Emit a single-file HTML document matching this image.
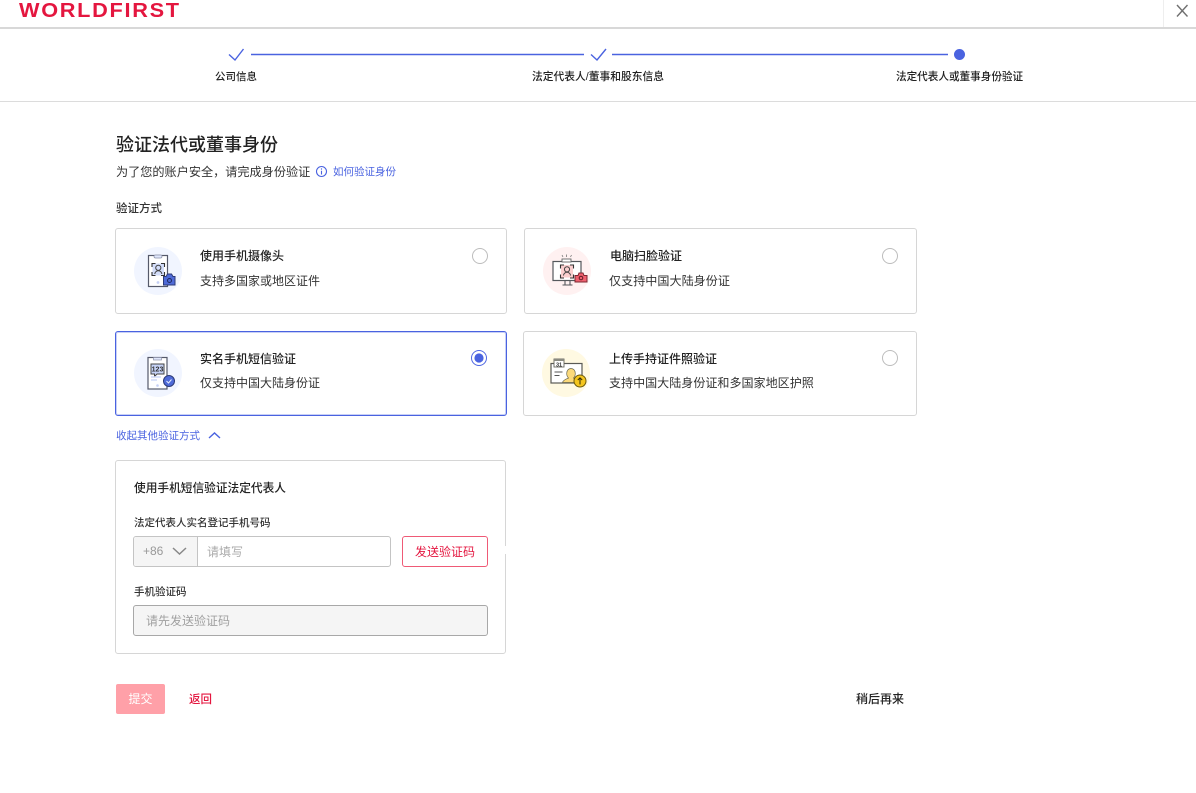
<!DOCTYPE html>
<html lang="zh-CN"><head><meta charset="utf-8"><title>WorldFirst</title>
<style>
html,body{margin:0;padding:0;background:#fff}
body{width:1196px;height:793px;overflow:hidden;position:relative;font-family:"Liberation Sans","Noto Sans CJK SC",sans-serif;color:#222}
.a{position:absolute;white-space:nowrap}
.t{position:absolute;white-space:nowrap;line-height:16px}
.m{font-weight:500}
.card{position:absolute;box-sizing:border-box;border:1px solid #d6d6d6;border-radius:3px;background:#fff}
.radio{position:absolute;box-sizing:border-box;width:16px;height:16px;border:1px solid #bdbdbd;border-radius:50%;background:#fff}
svg{position:absolute;overflow:visible}
</style></head><body>
<svg style="left:0;top:0" width="200" height="27"><text transform="translate(19,17) scale(1.06,1)" x="0" y="0" font-family="Liberation Sans" font-weight="700" font-size="20.500" fill="#e4163f" textLength="151" lengthAdjust="spacing">WORLDFIRST</text></svg>
<div class="a" style="left:0;top:27px;width:1196px;height:2px;background:#d8d8d8"></div>
<div class="a" style="left:1163px;top:0;width:1px;height:27px;background:#eee"></div>
<svg style="left:1176px;top:4px" width="13" height="13"><path d="M1 1L11.500 12.500M11.500 1L1 12.500" stroke="#707070" stroke-width="1.400" fill="none"/></svg>

<svg style="left:0;top:40px" width="1196" height="30" fill="none">
<path d="M229 14.500L235 20L243.500 9" stroke="#4a63e0" stroke-width="1.400"/>
<path d="M251 14.500H584M612 14.500H948" stroke="#4a63e0" stroke-width="1.500"/>
<path d="M591 14.500L597 20L606 9" stroke="#4a63e0" stroke-width="1.400"/>
<circle cx="959.500" cy="14.500" r="5.500" fill="#4a63e0"/>
</svg>
<div class="t m" style="left:215px;top:69px;font-size:10.500px">公司信息</div>
<div class="t m" style="left:532px;top:69px;font-size:10.750px">法定代表人/董事和股东信息</div>
<div class="t m" style="left:896px;top:69px;font-size:10.600px">法定代表人或董事身份验证</div>
<div class="a" style="left:0;top:101px;width:1196px;height:1px;background:#dcdcdc"></div>

<div class="t m" style="left:116px;top:134px;font-size:18px;line-height:22px;color:#222">验证法代或董事身份</div>
<div class="t" style="left:116px;top:164px;font-size:12.150px;color:#333">为了您的账户安全，请完成身份验证</div>
<svg style="left:315px;top:165px" width="13" height="13" fill="none"><circle cx="6.500" cy="6.500" r="5" stroke="#4a63e0" stroke-width="1.100"/><path d="M6.500 5.800V9.500M6.500 3.400V4.600" stroke="#4a63e0" stroke-width="1.100"/></svg>
<div class="t" style="left:333px;top:164px;font-size:10.500px;color:#4a63e0">如何验证身份</div>
<div class="t m" style="left:116px;top:201px;font-size:11.500px;color:#333">验证方式</div>

<div class="card" style="left:115px;top:228px;width:392px;height:86px"></div>
<div class="card" style="left:524px;top:228px;width:393px;height:86px"></div>
<div class="card" style="left:115px;top:331px;width:392px;height:85px;border:1px solid #4a63e0;box-shadow:inset 0 0 0 1px rgba(74,99,224,.3)"></div>
<div class="card" style="left:523px;top:331px;width:394px;height:85px"></div>

<!-- icon 1 -->
<svg style="left:134px;top:247px" width="48" height="48" fill="none">
<circle cx="24" cy="24" r="24" fill="#f1f5ff"/>
<rect x="14.500" y="8.500" width="19" height="31" fill="#fff" stroke="#55596a" stroke-width="1.200"/>
<rect x="20" y="8" width="8" height="3" rx="1.500" fill="#dfe6fb" stroke="#8a90a8" stroke-width=".7"/>
<rect x="18.500" y="16.500" width="11.500" height="12" fill="#d3ddfa"/>
<path d="M18 20v-3.500h3.500M27 16.500h3.500V20M18 25v3.500h3.500M30.500 25v3.500H27" stroke="#333" stroke-width="1.100"/>
<circle cx="24.300" cy="20.800" r="2.600" stroke="#444" stroke-width="1"/><path d="M20.800 27c0-2 2-3.200 3.500-3.200s3.500 1.200 3.500 3.200" stroke="#444" stroke-width="1"/>
<circle cx="24" cy="35.500" r="1.400" fill="#c5d0f5"/>
<path d="M29.500 29.500h2.500l1.500-2.500h4l1.500 2.500h2v8.500H29.500z" fill="#4f6bd8" stroke="#2c3a78" stroke-width="1"/><circle cx="35.500" cy="33.500" r="2" stroke="#1f2a60" stroke-width="1"/>
</svg>
<!-- icon 2 -->
<svg style="left:543px;top:247px" width="48" height="48" fill="none">
<circle cx="24" cy="24" r="24" fill="#fff1f1"/>
<rect x="10" y="14.500" width="28" height="19" fill="#fff" stroke="#55585c" stroke-width="1.200"/>
<rect x="19" y="12" width="9" height="3" fill="#fff" stroke="#666" stroke-width=".9"/>
<path d="M19 8l1 2M23.500 7.500V10M28.500 8l-1 2" stroke="#777" stroke-width=".8"/>
<rect x="18" y="18" width="12" height="12.500" fill="#fbcfcf"/>
<path d="M17.500 21.500V18H21M27 18h3.500v3.500M17.500 27.500V31H21M30.500 27.500V31H27" stroke="#333" stroke-width="1.100"/>
<circle cx="24" cy="22.300" r="2.600" stroke="#444" stroke-width="1"/><path d="M20.500 28.500c0-2 2-3.200 3.500-3.200s3.500 1.200 3.500 3.200" stroke="#444" stroke-width="1"/>
<path d="M19.500 38h10M22 34v4M27 34v4" stroke="#55585c" stroke-width="1.100"/>
<path d="M32 28.500h3l1-2.500h4l1 2.500h3V35H32z" fill="#f1606f" stroke="#7c2630" stroke-width="1"/><circle cx="38" cy="31" r="1.800" stroke="#5c1b24" stroke-width="1"/>
</svg>
<!-- icon 3 -->
<svg style="left:134px;top:349px" width="48" height="48" fill="none">
<circle cx="24" cy="24" r="24" fill="#f1f5ff"/>
<rect x="14" y="8.500" width="19" height="31.500" fill="#fff" stroke="#55596a" stroke-width="1.200"/>
<rect x="19.500" y="8.500" width="8" height="2.500" fill="#dfe6fb" stroke="#8a90a8" stroke-width=".7"/>
<path d="M17 15h13v10h-7l-2.500 2.500V25H17z" fill="#c6d3f7" stroke="#444" stroke-width="1"/>
<text x="23.500" y="22.700" font-family="Liberation Sans" font-size="7" font-weight="700" fill="#333" text-anchor="middle">123</text>
<path d="M17 28h10M17 31h6" stroke="#cfdaf8" stroke-width="1.500"/>
<circle cx="23.500" cy="36.500" r="1.300" fill="#c5d0f5"/>
<circle cx="35" cy="32" r="5.500" fill="#4f6bd8" stroke="#2c3a78"/><path d="M32.500 32l2 2 3-3.500" stroke="#e8edff" stroke-width="1"/>
</svg>
<!-- icon 4 -->
<svg style="left:542px;top:349px" width="48" height="48" fill="none">
<circle cx="24" cy="24" r="24" fill="#fff9e2"/>
<rect x="9" y="14.500" width="31" height="19.500" fill="#fff" stroke="#5a5a55" stroke-width="1.200"/>
<rect x="12" y="10" width="10" height="8" fill="#fff" stroke="#66665f" stroke-width=".9"/>
<rect x="12" y="10" width="10" height="2" fill="#8a8a80"/>
<text x="17" y="17.400" font-family="Liberation Sans" font-size="5.500" font-weight="700" fill="#333" text-anchor="middle">31</text>
<path d="M12.500 23h8M12.500 26.500h5" stroke="#555" stroke-width="1"/>
<path d="M20.500 33.500c.5-2.500 4-3.500 6-4.500-1.200-1.200-1.800-3-1.800-4.500 0-3 1.800-5 4.300-5s4.300 2 4.300 5c0 1.500-.6 3.300-1.800 4.500 2 1 4 2 6 4.500z" fill="#fbd97a" stroke="#6d6a50" stroke-width=".7"/>
<circle cx="38" cy="32" r="6" fill="#f4c51d" stroke="#6c5a0c"/><path d="M38 35.500v-6.500M35.800 31l2.200-2.200 2.200 2.200" stroke="#332b06" stroke-width="1"/>
</svg>

<div class="t m" style="left:200px;top:248px;font-size:12px;color:#222">使用手机摄像头</div>
<div class="t" style="left:200px;top:273px;font-size:12px;color:#333">支持多国家或地区证件</div>
<div class="t m" style="left:610px;top:248px;font-size:12px;color:#222">电脑扫脸验证</div>
<div class="t" style="left:609px;top:273px;font-size:12.100px;color:#333">仅支持中国大陆身份证</div>
<div class="t m" style="left:200px;top:351px;font-size:12px;color:#222">实名手机短信验证</div>
<div class="t" style="left:200px;top:375px;font-size:12px;color:#333">仅支持中国大陆身份证</div>
<div class="t m" style="left:609px;top:351px;font-size:12px;color:#222">上传手持证件照验证</div>
<div class="t" style="left:609px;top:375px;font-size:12.050px;color:#333">支持中国大陆身份证和多国家地区护照</div>

<div class="radio" style="left:472px;top:248px"></div>
<div class="radio" style="left:882px;top:248px"></div>
<div class="radio" style="left:882px;top:350px"></div>
<div class="radio" style="left:471px;top:350px;border-color:#5068e2"></div>
<div class="a" style="left:475px;top:354px;width:8px;height:8px;border-radius:50%;background:#4a63e0;box-shadow:0 0 0 .6px #4a63e0"></div>

<div class="t" style="left:116px;top:428px;font-size:10.500px;color:#4a63e0">收起其他验证方式</div>
<svg style="left:208px;top:431px" width="13" height="9" fill="none"><path d="M1 7l5.500-5L12 7" stroke="#4a63e0" stroke-width="1.400"/></svg>

<div class="card" style="left:115px;top:460px;width:391px;height:194px"></div>
<div class="a" style="left:503px;top:546px;width:4px;height:8px;background:#fff"></div>
<div class="t m" style="left:134px;top:481px;font-size:11.700px;color:#222">使用手机短信验证法定代表人</div>
<div class="t m" style="left:134px;top:515px;font-size:10.500px;color:#333">法定代表人实名登记手机号码</div>
<div class="a" style="left:133px;top:536px;box-sizing:border-box;width:258px;height:31px;border:1px solid #c4c4c4;border-radius:3px;background:#fff"></div>
<div class="a" style="left:134px;top:537px;width:63px;height:29px;background:#f5f5f5;border-right:1px solid #c4c4c4;border-radius:2px 0 0 2px"></div>
<div class="t" style="left:143px;top:543px;font-size:12px;color:#999">+86</div>
<svg style="left:172px;top:547px" width="15" height="9" fill="none"><path d="M1 1l6.500 6L14 1" stroke="#888" stroke-width="1.500"/></svg>
<div class="t" style="left:207px;top:544px;font-size:12px;color:#aaa">请填写</div>
<div class="a" style="left:402px;top:536px;box-sizing:border-box;width:86px;height:31px;border:1px solid #ef5a76;border-radius:3px;background:#fff;color:#e4163f;font-size:12px;line-height:30px;text-align:center">发送验证码</div>
<div class="t m" style="left:134px;top:584px;font-size:10.500px;color:#333">手机验证码</div>
<div class="a" style="left:133px;top:605px;box-sizing:border-box;width:355px;height:31px;border:1px solid #a8a8a8;border-radius:3px;background:#f5f5f5"></div>
<div class="t" style="left:146px;top:613px;font-size:12px;color:#a0a0a0">请先发送验证码</div>

<div class="a" style="left:116px;top:684px;width:49px;height:30px;border-radius:2px;background:#ffa0a8;color:#fff;font-size:12px;line-height:31px;text-align:center">提交</div>
<div class="t m" style="left:189px;top:692px;font-size:11.500px;color:#e4163f">返回</div>
<div class="t m" style="left:856px;top:691px;font-size:12px;color:#222">稍后再来</div>
</body></html>
